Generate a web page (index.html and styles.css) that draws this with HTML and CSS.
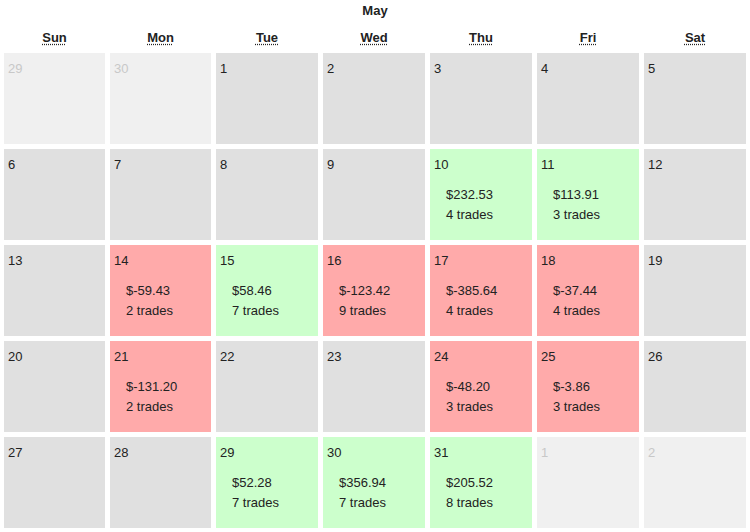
FILE: index.html
```html
<!DOCTYPE html>
<html>
<head>
<meta charset="utf-8">
<link rel="stylesheet" href="styles.css">
</head>
<body>
<div class="calendar">
  <div class="title">May</div>
  <div class="grid">
    <div class="wd"><abbr title="Sunday">Sun</abbr></div>
    <div class="wd"><abbr title="Monday">Mon</abbr></div>
    <div class="wd"><abbr title="Tuesday">Tue</abbr></div>
    <div class="wd"><abbr title="Wednesday">Wed</abbr></div>
    <div class="wd"><abbr title="Thursday">Thu</abbr></div>
    <div class="wd"><abbr title="Friday">Fri</abbr></div>
    <div class="wd"><abbr title="Saturday">Sat</abbr></div>

    <div class="day other"><div class="num">29</div></div>
    <div class="day other"><div class="num">30</div></div>
    <div class="day"><div class="num">1</div></div>
    <div class="day"><div class="num">2</div></div>
    <div class="day"><div class="num">3</div></div>
    <div class="day"><div class="num">4</div></div>
    <div class="day"><div class="num">5</div></div>

    <div class="day"><div class="num">6</div></div>
    <div class="day"><div class="num">7</div></div>
    <div class="day"><div class="num">8</div></div>
    <div class="day"><div class="num">9</div></div>
    <div class="day win"><div class="num">10</div><div class="pl"><div>$232.53</div><div>4 trades</div></div></div>
    <div class="day win"><div class="num">11</div><div class="pl"><div>$113.91</div><div>3 trades</div></div></div>
    <div class="day"><div class="num">12</div></div>

    <div class="day"><div class="num">13</div></div>
    <div class="day loss"><div class="num">14</div><div class="pl"><div>$-59.43</div><div>2 trades</div></div></div>
    <div class="day win"><div class="num">15</div><div class="pl"><div>$58.46</div><div>7 trades</div></div></div>
    <div class="day loss"><div class="num">16</div><div class="pl"><div>$-123.42</div><div>9 trades</div></div></div>
    <div class="day loss"><div class="num">17</div><div class="pl"><div>$-385.64</div><div>4 trades</div></div></div>
    <div class="day loss"><div class="num">18</div><div class="pl"><div>$-37.44</div><div>4 trades</div></div></div>
    <div class="day"><div class="num">19</div></div>

    <div class="day"><div class="num">20</div></div>
    <div class="day loss"><div class="num">21</div><div class="pl"><div>$-131.20</div><div>2 trades</div></div></div>
    <div class="day"><div class="num">22</div></div>
    <div class="day"><div class="num">23</div></div>
    <div class="day loss"><div class="num">24</div><div class="pl"><div>$-48.20</div><div>3 trades</div></div></div>
    <div class="day loss"><div class="num">25</div><div class="pl"><div>$-3.86</div><div>3 trades</div></div></div>
    <div class="day"><div class="num">26</div></div>

    <div class="day"><div class="num">27</div></div>
    <div class="day"><div class="num">28</div></div>
    <div class="day win"><div class="num">29</div><div class="pl"><div>$52.28</div><div>7 trades</div></div></div>
    <div class="day win"><div class="num">30</div><div class="pl"><div>$356.94</div><div>7 trades</div></div></div>
    <div class="day win"><div class="num">31</div><div class="pl"><div>$205.52</div><div>8 trades</div></div></div>
    <div class="day other"><div class="num">1</div></div>
    <div class="day other"><div class="num">2</div></div>
  </div>
</div>
</body>
</html>
```

FILE: styles.css
```css
html, body {
  margin: 0;
  padding: 0;
  background: #ffffff;
}
body {
  font-family: "Liberation Sans", Arial, sans-serif;
  font-size: 13px;
  color: #222222;
}
.calendar {
  width: 750px;
}
.title {
  height: 20px;
  padding-top: 1px;
  box-sizing: border-box;
  line-height: 20px;
  text-align: center;
  font-weight: bold;
  color: #222222;
}
.grid {
  display: grid;
  grid-template-columns: 101px 101px repeat(5, 102px);
  grid-template-rows: 28px repeat(5, 91px);
  gap: 5px;
  padding: 0 4px;
}
.wd {
  padding-top: 8px;
  line-height: 20px;
  text-align: center;
  font-weight: bold;
  color: #222222;
}
.wd abbr {
  text-decoration: underline dotted;
  text-underline-offset: 2px;
  cursor: help;
}
.day {
  background: #e0e0e0;
  padding: 6px 4px 4px;
  line-height: 20px;
}
.day.other {
  background: #f0f0f0;
  color: #c8c8c8;
}
.day.win {
  background: #ccffcc;
}
.day.loss {
  background: #ffaaaa;
}
.pl {
  margin-top: 10px;
  padding-left: 12px;
}
```
